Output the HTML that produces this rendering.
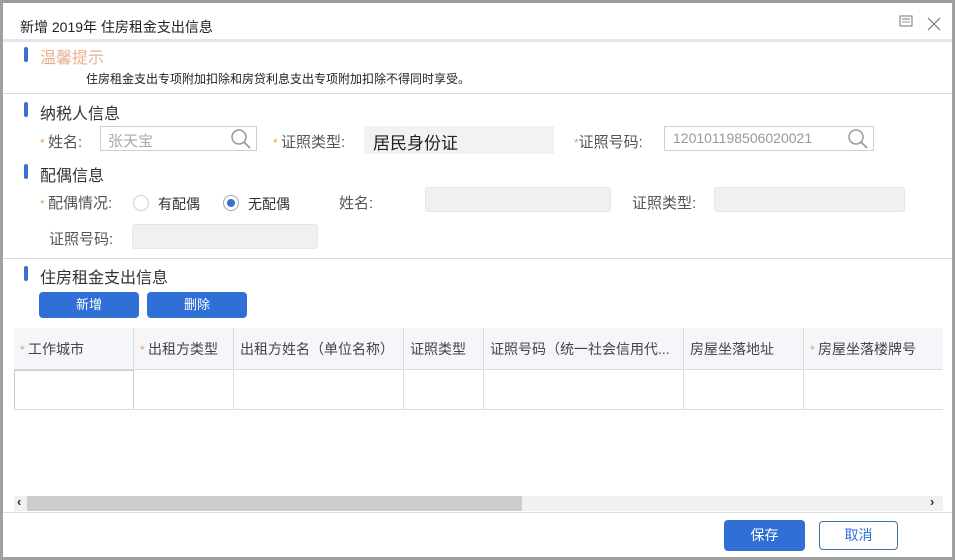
<!DOCTYPE html>
<html><head><meta charset="utf-8"><style>
*{margin:0;padding:0;box-sizing:border-box}
body{width:955px;height:560px;position:relative;background:#fff;font-family:"Liberation Sans","Noto Sans CJK SC",sans-serif;color:#333;overflow:hidden}
.a{position:absolute;white-space:nowrap}
.bar{position:absolute;left:24px;width:4px;height:15px;background:#3b6fd0;border-radius:2px}
.h{font-size:16px;color:#333}
.lb{font-size:15px;color:#555}
.st{color:#e8a060;font-size:12px}
.in{position:absolute;border:1px solid #cfcfcf;background:#fff;height:25px}
.dis{position:absolute;background:#f0f0f2;border:1px solid #e6e6e8;border-radius:3px;height:25px}
.btn{position:absolute;background:#2f6fd6;color:#fff;font-size:13px;text-align:center;border-radius:4px}
.th{position:absolute;top:328px;height:42px;line-height:42px;font-size:14px;color:#444;padding-left:6px;border-left:1px solid #dcdcdc;border-bottom:1px solid #dcdcdc;background:#f4f6fa}
</style></head><body>
<div class="a" style="left:0;top:0;width:955px;height:3px;background:#9a9a9a"></div>
<div class="a" style="left:0;top:0;width:3px;height:560px;background:#a0a0a0"></div>
<div class="a" style="left:952px;top:0;width:3px;height:560px;background:#a0a0a0"></div>
<div class="a" style="left:0;top:557px;width:955px;height:3px;background:#a0a0a0"></div>
<div class="a" style="left:20px;top:17px;font-size:14px;color:#222">新增 2019年 住房租金支出信息</div>
<svg class="a" style="left:899px;top:15px" width="14" height="12"><rect x="1" y="1" width="12" height="10" fill="none" stroke="#777"/><line x1="3" y1="4" x2="11" y2="4" stroke="#777"/><line x1="3" y1="7" x2="11" y2="7" stroke="#999"/></svg>
<svg class="a" style="left:927px;top:17px" width="14" height="14"><path d="M1 1L13 13M13 1L1 13" stroke="#777" stroke-width="1.2"/></svg>
<div class="a" style="left:3px;top:39px;width:949px;height:3px;background:#e3e6ec"></div>
<div class="bar" style="top:47px"></div>
<div class="a" style="left:40px;top:44px;font-size:16px;color:#e8b090">温馨提示</div>
<div class="a" style="left:86px;top:70px;font-size:12px;color:#222">住房租金支出专项附加扣除和房贷利息支出专项附加扣除不得同时享受。</div>
<div class="a" style="left:3px;top:93px;width:949px;height:1px;background:#ddd"></div>
<div class="bar" style="top:102px"></div>
<div class="a h" style="left:40px;top:100px">纳税人信息</div>
<div class="a lb" style="left:40px;top:131px"><span class="st">* </span>姓名:</div>
<div class="in" style="left:100px;top:126px;width:157px"></div>
<div class="a" style="left:108px;top:130px;font-size:15px;color:#aaa">张天宝</div>
<svg class="a" style="left:230px;top:128px" width="22" height="22"><circle cx="9" cy="9" r="7" fill="none" stroke="#999" stroke-width="1.5"/><path d="M14 14L20 20" stroke="#999" stroke-width="1.8"/></svg>
<div class="a lb" style="left:273px;top:131px"><span class="st">* </span>证照类型:</div>
<div class="a" style="left:364px;top:126px;width:190px;height:28px;background:#f2f2f4"></div>
<div class="a" style="left:373px;top:129px;font-size:17px;color:#222">居民身份证</div>
<div class="a lb" style="left:574px;top:131px"><span class="st">*</span>证照号码:</div>
<div class="in" style="left:664px;top:126px;width:210px"></div>
<div class="a" style="left:673px;top:130px;font-size:14px;color:#999">120101198506020021</div>
<svg class="a" style="left:847px;top:128px" width="22" height="22"><circle cx="9" cy="9" r="7" fill="none" stroke="#999" stroke-width="1.5"/><path d="M14 14L20 20" stroke="#999" stroke-width="1.8"/></svg>
<div class="bar" style="top:164px"></div>
<div class="a h" style="left:40px;top:162px">配偶信息</div>
<div class="a lb" style="left:40px;top:192px"><span class="st">* </span>配偶情况:</div>
<div class="a" style="left:133px;top:195px;width:16px;height:16px;border:1px solid #ccc;border-radius:50%"></div>
<div class="a" style="left:158px;top:194px;font-size:14px;color:#333">有配偶</div>
<div class="a" style="left:223px;top:195px;width:16px;height:16px;border:1px solid #9ab;border-radius:50%"><div style="margin:3px;width:8px;height:8px;border-radius:50%;background:#3b6fd0"></div></div>
<div class="a" style="left:248px;top:194px;font-size:14px;color:#333">无配偶</div>
<div class="a lb" style="left:339px;top:192px">姓名:</div>
<div class="dis" style="left:425px;top:187px;width:186px"></div>
<div class="a lb" style="left:632px;top:192px">证照类型:</div>
<div class="dis" style="left:714px;top:187px;width:191px"></div>
<div class="a lb" style="left:49px;top:228px">证照号码:</div>
<div class="dis" style="left:132px;top:224px;width:186px"></div>
<div class="a" style="left:3px;top:258px;width:949px;height:1px;background:#ddd"></div>
<div class="bar" style="top:266px"></div>
<div class="a h" style="left:40px;top:264px">住房租金支出信息</div>
<div class="btn" style="left:39px;top:292px;width:100px;height:26px;line-height:26px">新增</div>
<div class="btn" style="left:147px;top:292px;width:100px;height:26px;line-height:26px">删除</div>
<div class="a" style="left:14px;top:328px;width:929px;height:42px;background:#f4f6fa;border-bottom:1px solid #dcdcdc"></div>
<div class="th" style="left:14px;width:120px;border-left:none"><span class="st">* </span>工作城市</div>
<div class="th" style="left:133px;width:101px"><span class="st">* </span>出租方类型</div>
<div class="th" style="left:233px;width:171px">出租方姓名（单位名称）</div>
<div class="th" style="left:403px;width:81px">证照类型</div>
<div class="th" style="left:483px;width:201px">证照号码（统一社会信用代...</div>
<div class="th" style="left:683px;width:121px">房屋坐落地址</div>
<div class="th" style="left:803px;width:140px"><span class="st">* </span>房屋坐落楼牌号</div>
<div class="a" style="left:14px;top:370px;width:120px;height:40px;border:1px solid #ccc"></div>
<div class="a" style="left:233px;top:370px;width:1px;height:40px;background:#ddd"></div>
<div class="a" style="left:403px;top:370px;width:1px;height:40px;background:#ddd"></div>
<div class="a" style="left:483px;top:370px;width:1px;height:40px;background:#ddd"></div>
<div class="a" style="left:683px;top:370px;width:1px;height:40px;background:#ddd"></div>
<div class="a" style="left:803px;top:370px;width:1px;height:40px;background:#ddd"></div>
<div class="a" style="left:14px;top:409px;width:929px;height:1px;background:#ddd"></div>
<div class="a" style="left:14px;top:496px;width:929px;height:15px;background:#f1f1f1"></div>
<div class="a" style="left:27px;top:496px;width:495px;height:15px;background:#cdcccf"></div>
<div class="a" style="left:17px;top:494px;font-size:13px;color:#333;font-weight:bold">‹</div>
<div class="a" style="left:930px;top:494px;font-size:13px;color:#333;font-weight:bold">›</div>
<div class="a" style="left:3px;top:512px;width:949px;height:1px;background:#ddd"></div>
<div class="btn" style="left:724px;top:520px;width:81px;height:31px;line-height:31px;font-size:14px">保存</div>
<div class="a" style="left:819px;top:521px;width:79px;height:29px;line-height:27px;border:1px solid #4a6fa0;border-radius:4px;text-align:center;font-size:14px;color:#2f6fd6">取消</div>
</body></html>
